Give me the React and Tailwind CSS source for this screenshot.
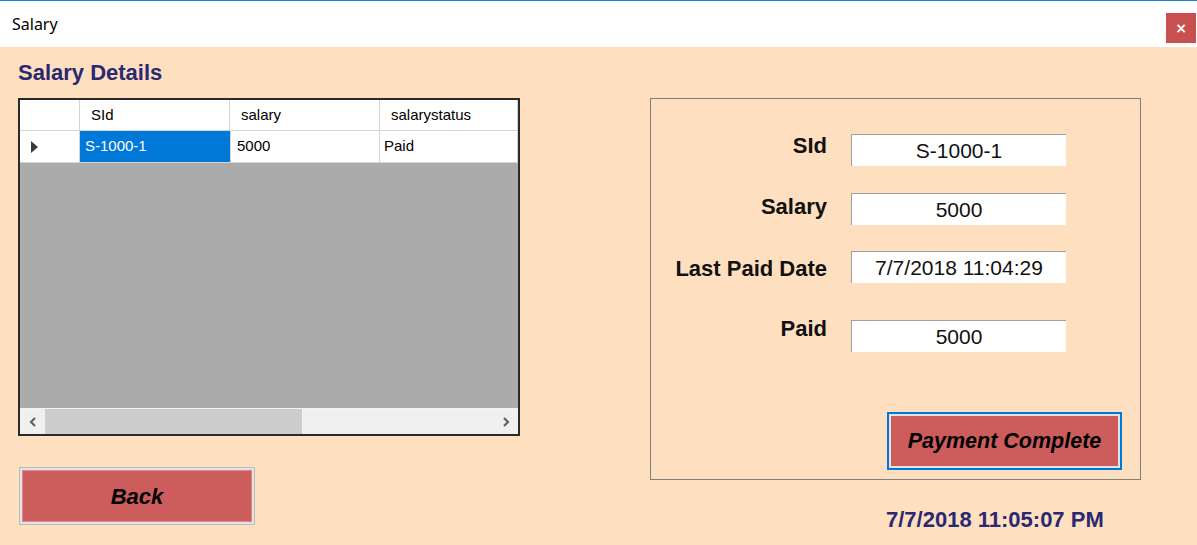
import React from "react";

const columns = [
  { key: "sid", title: "SId", width: "w-[150px]" },
  { key: "salary", title: "salary", width: "w-[150px]" },
  { key: "status", title: "salarystatus", width: "flex-1" },
];

const rows = [{ sid: "S-1000-1", salary: "5000", status: "Paid" }];

const fields = [
  { label: "SId", value: "S-1000-1", row: "mt-[35px]", label_: "-mt-px" },
  { label: "Salary", value: "5000", row: "mt-[27px]", label_: "mt-px" },
  { label: "Last Paid Date", value: "7/7/2018 11:04:29", row: "mt-[26px]", label_: "mt-[5px]" },
  { label: "Paid", value: "5000", row: "mt-[37px]", label_: "-mt-[4px]" },
];

function Chevron({ dir }) {
  return (
    <svg width="8" height="10" viewBox="0 0 8 10">
      <path
        d={dir === "left" ? "M6 1 L2 5 L6 9" : "M2 1 L6 5 L2 9"}
        fill="none"
        stroke="#606060"
        strokeWidth="2.2"
      />
    </svg>
  );
}

function SalaryGrid() {
  return (
    <div className="w-[502px] h-[338px] border-2 border-[#2a2a2a] bg-[#ababab] flex flex-col font-['Liberation_Sans',Arial,sans-serif] text-[15px] text-black">
      <div className="flex h-[31px] bg-white border-b border-[#d4d4d4]">
        <div className="w-[60px] border-r border-[#d4d4d4]" />
        {columns.map((c) => (
          <div
            key={c.key}
            className={`${c.width} flex items-center pl-[11px] border-r border-[#d4d4d4]`}
          >
            {c.title}
          </div>
        ))}
      </div>
      {rows.map((r) => (
        <div key={r.sid} className="flex h-[32px] bg-white border-b border-[#d4d4d4]">
          <div className="w-[60px] border-r border-[#d4d4d4] flex items-center pl-[11px]">
            <svg width="7" height="12" viewBox="0 0 7 12">
              <path d="M0 0 L7 6 L0 12 Z" fill="#3a3a3a" />
            </svg>
          </div>
          <div className="w-[150px] flex items-center pl-[5px] bg-[#0078d7] text-white">
            {r.sid}
          </div>
          <div className="w-[150px] flex items-center pl-[6px] border-l border-r border-[#d4d4d4]">
            {r.salary}
          </div>
          <div className="flex-1 flex items-center pl-[4px] border-r border-[#d4d4d4]">
            {r.status}
          </div>
        </div>
      ))}
      <div className="flex-1" />
      <div className="flex h-[26px] bg-[#f0f0f0] border-t border-[#f4f4f4]">
        <div className="w-[25px] flex items-center justify-center">
          <Chevron dir="left" />
        </div>
        <div className="w-[257px] bg-[#cdcdcd]" />
        <div className="flex-1" />
        <div className="w-[25px] flex items-center justify-center">
          <Chevron dir="right" />
        </div>
      </div>
    </div>
  );
}

export default function App() {
  return (
    <div className="w-[1197px] h-[545px] flex flex-col overflow-hidden">
      <div className="h-[47px] bg-white border-t border-[#1883d7] flex items-start justify-between">
        <span className="pl-[12px] mt-[11px] text-[16px] leading-[24px] text-black font-['Noto_Sans','Open_Sans',sans-serif]">
          Salary
        </span>
        <button className="mt-[12px] mr-px w-[30px] h-[30px] bg-[#c75050] text-white flex items-center justify-center text-[14px] leading-none font-bold font-['DejaVu_Sans',sans-serif]">
          ×
        </button>
      </div>

      <div className="flex-1 bg-[#fedfc0] flex font-['Liberation_Sans',Arial,sans-serif]">
        <div className="pl-[18px] flex flex-col">
          <h1 className="mt-[13px] h-[26px] leading-[26px] text-[22px] font-bold text-[#2b2872]">
            Salary Details
          </h1>
          <div className="mt-[12px]">
            <SalaryGrid />
          </div>
          <button className="mt-[31px] ml-px w-[236px] h-[58px] border border-[#bcbcbc] bg-[#e3e3e3] p-[2px]">
            <div className="w-full h-full bg-[#cd5c5c] border border-[#d98a8a] flex items-center justify-center text-[22px] font-bold italic text-black">
              Back
            </div>
          </button>
        </div>

        <div className="ml-[130px] flex flex-col">
          <div className="mt-[51px] w-[491px] h-[382px] border border-[#7f7f7f] flex flex-col">
            {fields.map((f) => (
              <div key={f.label} className={`${f.row} flex items-start`}>
                <div
                  className={`${f.label_} w-[176px] h-[26px] leading-[26px] text-right text-[22px] font-bold text-[#111]`}
                >
                  {f.label}
                </div>
                <div className="ml-[24px] w-[215px] h-[32px] bg-white border-t border-l border-[#a0a0a0] flex items-center justify-center text-[21px] text-[#111]">
                  {f.value}
                </div>
              </div>
            ))}
            <button className="mt-[60px] ml-[236px] w-[235px] h-[58px] border-2 border-[#0078d7] bg-[#e3e3e3] p-[2px]">
              <div className="w-full h-full bg-[#cd5c5c] flex items-center justify-center text-[21.5px] font-bold italic text-black">
                Payment Complete
              </div>
            </button>
          </div>
          <div className="mt-[27px] ml-[236px] h-[26px] leading-[26px] text-[22px] font-bold text-[#2b2872] whitespace-nowrap">
            7/7/2018 11:05:07 PM
          </div>
        </div>
      </div>
    </div>
  );
}
